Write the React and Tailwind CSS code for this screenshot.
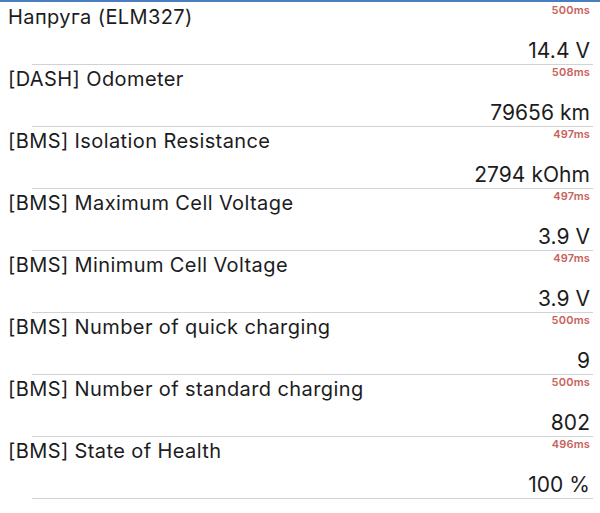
import React from 'react';

const rows = [
  { label: 'Напруга (ELM327)', value: '14.4 V', ms: '500ms' },
  { label: '[DASH] Odometer', value: '79656 km', ms: '508ms' },
  { label: '[BMS] Isolation Resistance', value: '2794 kOhm', ms: '497ms' },
  { label: '[BMS] Maximum Cell Voltage', value: '3.9 V', ms: '497ms' },
  { label: '[BMS] Minimum Cell Voltage', value: '3.9 V', ms: '497ms' },
  { label: '[BMS] Number of quick charging', value: '9', ms: '500ms' },
  { label: '[BMS] Number of standard charging', value: '802', ms: '500ms' },
  { label: '[BMS] State of Health', value: '100 %', ms: '496ms' },
];

function Row({ label, value, ms }) {
  return (
    <div className="flex h-[62.14px] flex-col">
      <div className="flex items-start justify-between pl-2 pr-[10px]">
        <span className="mt-[3px] text-[20px] leading-[24px] tracking-[0.4px] text-[#1c1c1e]">{label}</span>
        <span className="mt-[2px] text-[11px] font-semibold leading-[12px] tracking-[0.2px] text-[#c8625c]">{ms}</span>
      </div>
      <div className="mt-[9px] pr-[10px] text-right text-[21px] leading-[26px] tracking-[0.05px] text-[#1c1c1e]">{value}</div>
      <div className="mt-auto ml-8 mr-[7px] h-px bg-[#d2d2d4]" />
    </div>
  );
}

export default function App() {
  return (
    <div className="h-[513px] w-[600px] overflow-hidden bg-white font-['Inter',sans-serif]">
      <div className="h-[1.5px] bg-[#4a7cc0]" />
      {rows.map((r) => (
        <Row key={r.label} {...r} />
      ))}
    </div>
  );
}
